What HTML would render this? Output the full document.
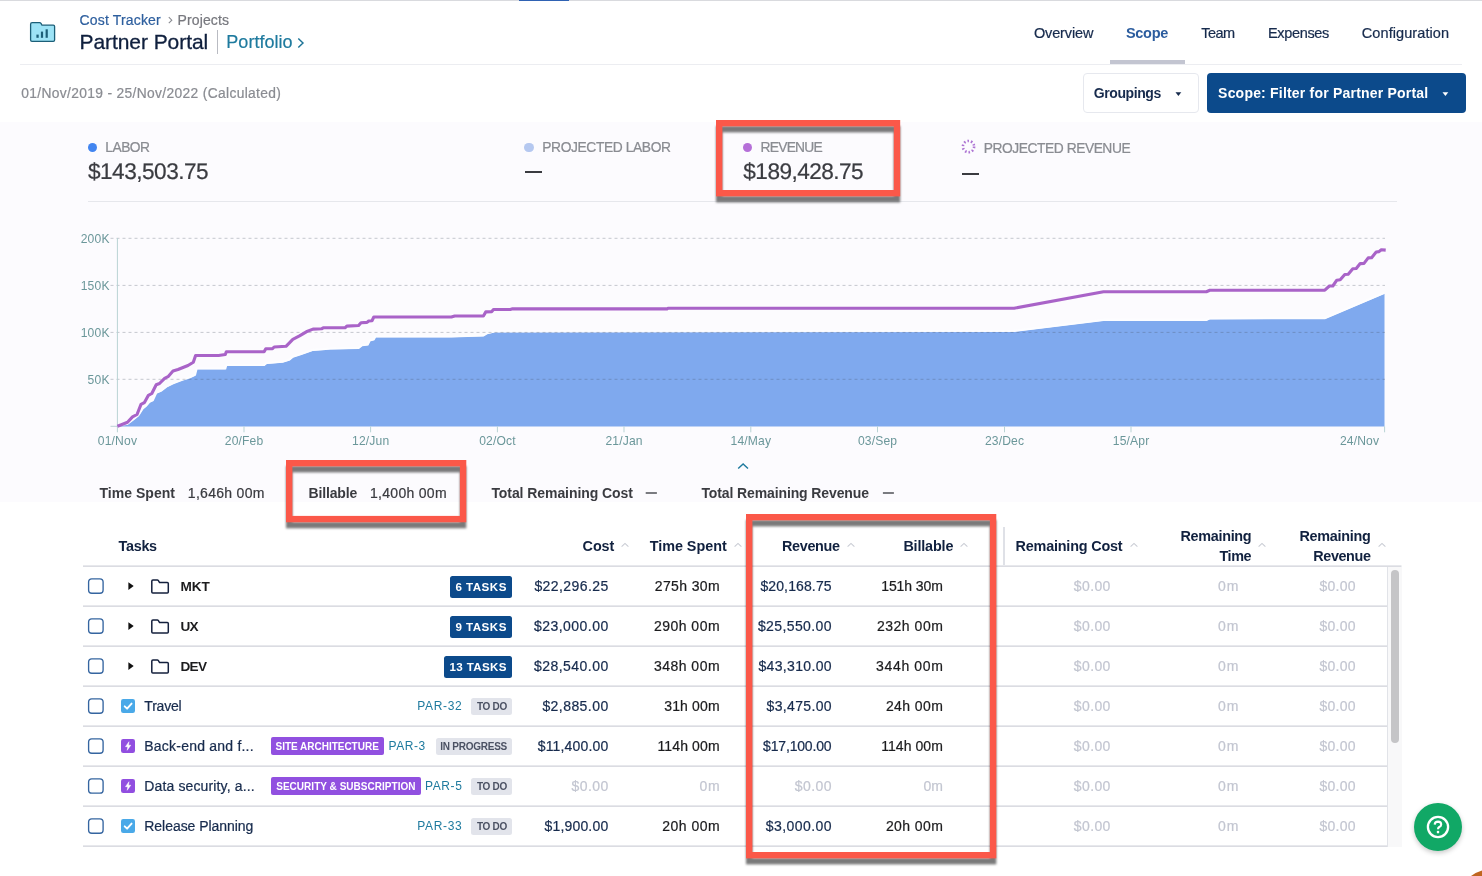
<!DOCTYPE html>
<html><head><meta charset="utf-8"><title>Cost Tracker - Partner Portal</title>
<style>
html,body{margin:0;padding:0;}
body{width:1482px;height:876px;position:relative;overflow:hidden;background:#fff;font-family:"Liberation Sans",sans-serif;}
.t{position:absolute;white-space:pre;}
.a{position:absolute;}
.hl{position:absolute;height:0;border-top:1.5px solid #d8dae0;}
.cb{position:absolute;left:87.7px;width:13.4px;height:13.4px;border:1.5px solid #3a6aa3;border-radius:3.5px;background:#fff;}
.tag{position:absolute;background:#0c4a8b;border-radius:2.5px;height:21.9px;}
.lz{position:absolute;background:#e2e4eb;border-radius:2.5px;height:17px;}
.pz{position:absolute;background:#9150e0;border-radius:2px;height:17.6px;}
.red{position:absolute;border:6.3px solid #fb5849;box-sizing:border-box;filter:drop-shadow(-0.3px 5.8px 1.3px rgba(0,0,0,.53));}
.ic{position:absolute;left:121.1px;width:14.2px;height:14px;border-radius:2.2px;}
</style></head><body><div id="w" style="position:absolute;left:0;top:0;width:1482px;height:876px;will-change:transform">
<!-- top bar -->
<div class="a" style="left:0;top:0;width:1482px;height:1.2px;background:#d9dade"></div>
<div class="a" style="left:519px;top:0;width:50px;height:1.3px;background:#2f62b3"></div>
<!-- header border + active tab -->
<div class="a" style="left:20px;top:64px;width:1442px;height:1px;background:#ecedf1"></div>
<div class="a" style="left:1110.2px;top:60.2px;width:74.7px;height:4px;background:#c3c5d1"></div>
<div class="a" style="left:217.2px;top:30px;width:1.2px;height:23.5px;background:#b9bbc2"></div>
<!-- app icon -->
<svg class="a" style="left:26px;top:18px" width="34" height="28" viewBox="26 18 34 28">
<path d="M30.6 24.2 Q30.6 22.7 32.1 22.7 L39.6 22.7 Q40.5 22.7 41 23.4 L42 25.2 L53.3 25.2 Q54.6 25.2 54.6 26.6 L54.6 40 Q54.6 41.4 53.3 41.4 L32 41.4 Q30.6 41.4 30.6 40 Z" fill="#9de3f6" stroke="#1c5f78" stroke-width="1.3" stroke-linejoin="round"/>
<rect x="36.4" y="34.6" width="2.3" height="3.2" fill="#1c5f78"/><rect x="40.9" y="31.6" width="2.2" height="6.2" fill="#1c5f78"/><rect x="45.6" y="29.3" width="2.2" height="8.5" fill="#1c5f78"/>
</svg>
<!-- breadcrumb chevron & portfolio chevron -->
<svg class="a" style="left:166px;top:14px" width="10" height="12" viewBox="0 0 10 12"><path d="M2.8 3.2 L5.8 6.2 L2.8 9.2" fill="none" stroke="#8a8c92" stroke-width="1.1"/></svg>
<svg class="a" style="left:295px;top:35px" width="12" height="16" viewBox="0 0 12 16"><path d="M3.3 3.5 L8 8 L3.3 12.5" fill="none" stroke="#1e7497" stroke-width="1.45"/></svg>
<!-- buttons -->
<div class="a" style="left:1083px;top:73.2px;width:113.7px;height:38px;border:1px solid #e6e8ee;border-radius:4px;background:#fff"></div>
<svg class="a" style="left:1174px;top:90px" width="9" height="8" viewBox="0 0 9 8"><path d="M1.5 2.3 L7.3 2.3 L4.4 6 Z" fill="#172b4d"/></svg>
<div class="a" style="left:1207px;top:73.2px;width:258.6px;height:40px;border-radius:4px;background:#0c4a8b"></div>
<svg class="a" style="left:1440.5px;top:90px" width="9" height="8" viewBox="0 0 9 8"><path d="M1.5 2.3 L7.3 2.3 L4.4 6 Z" fill="#fff"/></svg>
<!-- panel -->
<div class="a" style="left:0;top:122px;width:1482px;height:380px;background:#fcfbfe"></div>
<div class="a" style="left:88px;top:201px;width:1309px;height:1px;background:#e6e7ec"></div>
<div class="a" style="left:87.5px;top:142.6px;width:9.7px;height:9.7px;border-radius:50%;background:#4285f0"></div>
<div class="a" style="left:524.3px;top:142.6px;width:9.6px;height:9.6px;border-radius:50%;background:#b5c8f0"></div>
<div class="a" style="left:742.7px;top:142.6px;width:9.5px;height:9.5px;border-radius:50%;background:#b56fd8"></div>
<svg class="a" style="left:960px;top:138px" width="18" height="18" viewBox="0 0 18 18"><circle cx="8.5" cy="8.6" r="5.6" fill="none" stroke="#ad74d3" stroke-width="2.6" stroke-dasharray="1.55 1.97"/></svg>
<div class="a" style="left:524.8px;top:171.2px;width:17px;height:2px;background:#3a3b40"></div>
<div class="a" style="left:961.5px;top:173px;width:17.4px;height:2px;background:#3a3b40"></div>
<svg class="a" style="left:640px;top:488px" width="260" height="10" viewBox="640 488 260 10"><rect x="645.7" y="492.3" width="11.2" height="1.4" fill="#44454a"/><rect x="882.9" y="492.3" width="11" height="1.4" fill="#44454a"/></svg>
<svg class="a" style="left:735.5px;top:460.9px" width="14" height="10" viewBox="0 0 14 10"><path d="M2.2 7.6 L7.1 3 L12 7.6" fill="none" stroke="#1e7a9e" stroke-width="1.4"/></svg>
<svg class="a" style="left:0;top:220px" width="1482" height="240" viewBox="0 220 1482 240">
<path d="M117.4 425.8 L127.5 424.1 L134.2 419.0 L138.3 415.7 L142.7 408.9 L146.0 406.2 L149.4 402.2 L152.8 400.5 L156.2 393.1 L161.2 391.0 L166.3 387.0 L173.0 383.6 L181.5 380.3 L189.9 377.6 L195.0 375.2 L196.6 368.8 L225.3 368.8 L226.3 365.4 L264.1 365.4 L266.5 363.4 L282.7 362.0 L289.4 360.0 L292.8 357.0 L301.2 354.3 L313.0 350.2 L323.2 349.6 L330.0 348.9 L358.6 348.2 L362.0 345.5 L367.7 344.8 L369.7 340.8 L373.8 339.8 L375.5 336.7 L451.4 336.7 L483.4 335.7 L486.8 333.7 L495.2 331.7 L1014.1 331.3 L1103.5 320.2 L1206.4 320.2 L1209.8 318.7 L1324.8 318.5 L1384.5 293.2 L1384.5 426 L117.4 426 Z" fill="#7fa9ee" transform="translate(0,0.5)"/>
<path d="M117.4 425.8 L127.5 424.1 L134.2 419.0 L138.3 415.7 L142.7 408.9 L146.0 406.2 L149.4 402.2 L152.8 400.5 L156.2 393.1 L161.2 391.0 L166.3 387.0 L173.0 383.6 L181.5 380.3 L189.9 377.6 L195.0 375.2 L196.6 368.8 L225.3 368.8 L226.3 365.4 L264.1 365.4 L266.5 363.4 L282.7 362.0 L289.4 360.0 L292.8 357.0 L301.2 354.3 L313.0 350.2 L323.2 349.6 L330.0 348.9 L358.6 348.2 L362.0 345.5 L367.7 344.8 L369.7 340.8 L373.8 339.8 L375.5 336.7 L451.4 336.7 L483.4 335.7 L486.8 333.7 L495.2 331.7 L1014.1 331.3 L1103.5 320.2 L1206.4 320.2 L1209.8 318.7 L1324.8 318.5 L1384.5 293.2" fill="none" stroke="#fdfdff" stroke-width="2.2" transform="translate(0,-0.4)"/>
<path d="M110.5 238.3 L1385 238.3" stroke="rgba(70,80,95,.30)" stroke-width="1" stroke-dasharray="3 3"/>
<path d="M110.5 285.4 L1385 285.4" stroke="rgba(70,80,95,.30)" stroke-width="1" stroke-dasharray="3 3"/>
<path d="M110.5 332.4 L1385 332.4" stroke="rgba(70,80,95,.30)" stroke-width="1" stroke-dasharray="3 3"/>
<path d="M110.5 379.3 L1385 379.3" stroke="rgba(70,80,95,.30)" stroke-width="1" stroke-dasharray="3 3"/>
<path d="M117.4 238 L117.4 426.5" stroke="#b9d3d4" stroke-width="1"/>
<path d="M110.5 426.3 L117.4 426.3" stroke="#b9d3d4" stroke-width="1"/>
<path d="M117.4 426.3 L117.4 432.3" stroke="#b9d3d4" stroke-width="1"/>
<path d="M244 426.3 L244 432.3" stroke="#b9d3d4" stroke-width="1"/>
<path d="M370.6 426.3 L370.6 432.3" stroke="#b9d3d4" stroke-width="1"/>
<path d="M497.4 426.3 L497.4 432.3" stroke="#b9d3d4" stroke-width="1"/>
<path d="M624 426.3 L624 432.3" stroke="#b9d3d4" stroke-width="1"/>
<path d="M750.8 426.3 L750.8 432.3" stroke="#b9d3d4" stroke-width="1"/>
<path d="M877.5 426.3 L877.5 432.3" stroke="#b9d3d4" stroke-width="1"/>
<path d="M1004.5 426.3 L1004.5 432.3" stroke="#b9d3d4" stroke-width="1"/>
<path d="M1131 426.3 L1131 432.3" stroke="#b9d3d4" stroke-width="1"/>
<path d="M1384.6 426.3 L1384.6 432.3" stroke="#b9d3d4" stroke-width="1"/>
<path d="M117.4 425.8 L122.0 424.0 L127.5 421.8 L132.5 416.4 L137.0 414.0 L141.0 403.9 L144.3 402.2 L148.4 394.8 L151.8 393.0 L156.2 384.3 L159.5 383.0 L164.6 377.9 L168.0 376.2 L173.0 370.5 L178.0 369.0 L183.0 367.0 L188.0 365.0 L193.3 361.7 L195.6 355.0 L218.6 355.0 L225.3 354.0 L226.3 351.3 L264.1 351.3 L265.8 348.2 L272.5 348.2 L274.2 346.5 L286.0 345.8 L292.8 338.8 L299.5 335.4 L306.3 331.3 L313.0 328.6 L321.5 328.3 L323.2 327.3 L345.0 327.3 L346.8 325.6 L358.6 325.0 L361.0 322.2 L367.0 321.9 L368.7 320.5 L372.0 320.2 L373.8 316.5 L451.4 316.5 L454.7 315.5 L483.4 315.5 L485.8 311.4 L491.8 311.1 L493.5 309.0 L510.4 309.0 L512.0 308.4 L667.0 308.4 L668.0 307.7 L1014.1 307.7 L1103.5 291.2 L1206.4 291.2 L1209.8 289.8 L1324.8 289.6 L1329.4 285.5 L1332.8 285.5 L1336.8 279.7 L1340.2 279.3 L1344.8 274.0 L1348.2 273.7 L1352.8 268.3 L1356.2 268.0 L1360.2 263.1 L1364.0 262.9 L1368.2 257.4 L1371.6 257.2 L1376.2 251.5 L1379.0 251.1 L1381.3 249.2 L1385.7 249.6" fill="none" stroke="#a963c8" stroke-width="3.1" stroke-linejoin="round" stroke-linecap="butt" transform="translate(0,0.5)"/>
</svg>
<!-- table lines -->
<svg class="a" style="left:0;top:560px" width="1482" height="300" viewBox="0 560 1482 300"><rect x="83" y="565.4" width="1318.5" height="1.5" fill="#d8d9df"/><rect x="83" y="605.4" width="1304.5" height="1.5" fill="#d8d9df"/><rect x="83" y="645.4" width="1304.5" height="1.5" fill="#d8d9df"/><rect x="83" y="685.4" width="1304.5" height="1.5" fill="#d8d9df"/><rect x="83" y="725.4" width="1304.5" height="1.5" fill="#d8d9df"/><rect x="83" y="765.4" width="1304.5" height="1.5" fill="#d8d9df"/><rect x="83" y="805.4" width="1304.5" height="1.5" fill="#d8d9df"/><rect x="83" y="845.4" width="1304.5" height="1.5" fill="#d8d9df"/></svg>
<div class="a" style="left:1003.4px;top:527px;width:1.2px;height:38px;background:#dfe1e7"></div>
<div class="a" style="left:1387.5px;top:566.5px;width:14.3px;height:280.8px;background:#f8f8f9"></div>
<div class="a" style="left:1387px;top:566.5px;width:1px;height:280.8px;background:#e1e3e8"></div>
<svg class="a" style="left:1462px;top:864px" width="20" height="12" viewBox="0 0 20 12"><path d="M9 12 Q14.5 8.2 20 6.6 L20 12 Z" fill="#c0651f"/></svg>
<div class="a" style="left:1391px;top:569.5px;width:7.6px;height:173px;border-radius:4px;background:#c5c5c7"></div>
<svg class="a" style="left:86px;top:576.0px" width="20" height="20" viewBox="0 0 20 20"><rect x="2.6" y="2.8" width="14.5" height="14.4" rx="3.2" fill="#fff" stroke="#3565a0" stroke-width="1.35"/></svg>
<svg class="a" style="left:86px;top:616.0px" width="20" height="20" viewBox="0 0 20 20"><rect x="2.6" y="2.8" width="14.5" height="14.4" rx="3.2" fill="#fff" stroke="#3565a0" stroke-width="1.35"/></svg>
<svg class="a" style="left:86px;top:656.0px" width="20" height="20" viewBox="0 0 20 20"><rect x="2.6" y="2.8" width="14.5" height="14.4" rx="3.2" fill="#fff" stroke="#3565a0" stroke-width="1.35"/></svg>
<svg class="a" style="left:86px;top:696.0px" width="20" height="20" viewBox="0 0 20 20"><rect x="2.6" y="2.8" width="14.5" height="14.4" rx="3.2" fill="#fff" stroke="#3565a0" stroke-width="1.35"/></svg>
<svg class="a" style="left:86px;top:736.0px" width="20" height="20" viewBox="0 0 20 20"><rect x="2.6" y="2.8" width="14.5" height="14.4" rx="3.2" fill="#fff" stroke="#3565a0" stroke-width="1.35"/></svg>
<svg class="a" style="left:86px;top:776.0px" width="20" height="20" viewBox="0 0 20 20"><rect x="2.6" y="2.8" width="14.5" height="14.4" rx="3.2" fill="#fff" stroke="#3565a0" stroke-width="1.35"/></svg>
<svg class="a" style="left:86px;top:816.0px" width="20" height="20" viewBox="0 0 20 20"><rect x="2.6" y="2.8" width="14.5" height="14.4" rx="3.2" fill="#fff" stroke="#3565a0" stroke-width="1.35"/></svg>
<svg class="a" style="left:126px;top:580.2px" width="10" height="12" viewBox="0 0 10 12"><path d="M2.4 2.2 L7.7 6.1 L2.4 10 Z" fill="#111"/></svg>
<svg class="a" style="left:149px;top:577.2px" width="22" height="18" viewBox="0 0 22 18"><path d="M2.8 4.2 Q2.8 3.1 3.9 3.1 L8.3 3.1 Q9 3.1 9.4 3.7 L10.6 5.6 L18.3 5.6 Q19.3 5.6 19.3 6.6 L19.3 15 Q19.3 16 18.3 16 L3.8 16 Q2.8 16 2.8 15 Z" fill="none" stroke="#14203d" stroke-width="1.5" stroke-linejoin="round"/></svg>
<svg class="a" style="left:126px;top:620.2px" width="10" height="12" viewBox="0 0 10 12"><path d="M2.4 2.2 L7.7 6.1 L2.4 10 Z" fill="#111"/></svg>
<svg class="a" style="left:149px;top:617.2px" width="22" height="18" viewBox="0 0 22 18"><path d="M2.8 4.2 Q2.8 3.1 3.9 3.1 L8.3 3.1 Q9 3.1 9.4 3.7 L10.6 5.6 L18.3 5.6 Q19.3 5.6 19.3 6.6 L19.3 15 Q19.3 16 18.3 16 L3.8 16 Q2.8 16 2.8 15 Z" fill="none" stroke="#14203d" stroke-width="1.5" stroke-linejoin="round"/></svg>
<svg class="a" style="left:126px;top:660.2px" width="10" height="12" viewBox="0 0 10 12"><path d="M2.4 2.2 L7.7 6.1 L2.4 10 Z" fill="#111"/></svg>
<svg class="a" style="left:149px;top:657.2px" width="22" height="18" viewBox="0 0 22 18"><path d="M2.8 4.2 Q2.8 3.1 3.9 3.1 L8.3 3.1 Q9 3.1 9.4 3.7 L10.6 5.6 L18.3 5.6 Q19.3 5.6 19.3 6.6 L19.3 15 Q19.3 16 18.3 16 L3.8 16 Q2.8 16 2.8 15 Z" fill="none" stroke="#14203d" stroke-width="1.5" stroke-linejoin="round"/></svg>
<div class="tag" style="left:450.3px;top:575.7px;width:61.6px"></div>
<div class="tag" style="left:450.3px;top:615.7px;width:61.6px"></div>
<div class="tag" style="left:444.3px;top:655.7px;width:67.5px"></div>
<div class="ic" style="top:699.1px;background:#4aa9e8"><svg width="14.2" height="14" viewBox="0 0 14.2 14"><path d="M3.7 7.3 L6.1 9.7 L10.6 4.6" fill="none" stroke="#fff" stroke-width="1.9" stroke-linecap="round" stroke-linejoin="round"/></svg></div>
<div class="ic" style="top:739.1px;background:#914ee0"><svg width="14.2" height="14" viewBox="0 0 14.2 14"><path d="M8 2.7 L4.5 7.7 L6.8 7.7 L6.2 11.3 L9.8 6.2 L7.5 6.2 Z" fill="#fff" stroke="#fff" stroke-width="0.5" stroke-linejoin="round"/></svg></div>
<div class="ic" style="top:779.1px;background:#914ee0"><svg width="14.2" height="14" viewBox="0 0 14.2 14"><path d="M8 2.7 L4.5 7.7 L6.8 7.7 L6.2 11.3 L9.8 6.2 L7.5 6.2 Z" fill="#fff" stroke="#fff" stroke-width="0.5" stroke-linejoin="round"/></svg></div>
<div class="ic" style="top:819.1px;background:#4aa9e8"><svg width="14.2" height="14" viewBox="0 0 14.2 14"><path d="M3.7 7.3 L6.1 9.7 L10.6 4.6" fill="none" stroke="#fff" stroke-width="1.9" stroke-linecap="round" stroke-linejoin="round"/></svg></div>
<div class="lz" style="left:471.3px;top:697.6px;width:41.1px"></div>
<div class="lz" style="left:435.5px;top:737.6px;width:76.9px"></div>
<div class="lz" style="left:471.3px;top:777.6px;width:41.1px"></div>
<div class="lz" style="left:471.3px;top:817.6px;width:41.1px"></div>
<div class="pz" style="left:270.9px;top:737.3px;width:113.3px"></div>
<div class="pz" style="left:271.2px;top:777.3px;width:149.8px"></div>
<svg class="a" style="left:620.2px;top:540px" width="10" height="10" viewBox="0 0 10 10"><path d="M1.6 6.6 L5 3.4 L8.4 6.6" fill="none" stroke="#c9ccd4" stroke-width="1.1"/></svg>
<svg class="a" style="left:733.2px;top:540px" width="10" height="10" viewBox="0 0 10 10"><path d="M1.6 6.6 L5 3.4 L8.4 6.6" fill="none" stroke="#c9ccd4" stroke-width="1.1"/></svg>
<svg class="a" style="left:846.2px;top:540px" width="10" height="10" viewBox="0 0 10 10"><path d="M1.6 6.6 L5 3.4 L8.4 6.6" fill="none" stroke="#c9ccd4" stroke-width="1.1"/></svg>
<svg class="a" style="left:959.2px;top:540px" width="10" height="10" viewBox="0 0 10 10"><path d="M1.6 6.6 L5 3.4 L8.4 6.6" fill="none" stroke="#c9ccd4" stroke-width="1.1"/></svg>
<svg class="a" style="left:1128.8px;top:540px" width="10" height="10" viewBox="0 0 10 10"><path d="M1.6 6.6 L5 3.4 L8.4 6.6" fill="none" stroke="#c9ccd4" stroke-width="1.1"/></svg>
<svg class="a" style="left:1257.2px;top:540px" width="10" height="10" viewBox="0 0 10 10"><path d="M1.6 6.6 L5 3.4 L8.4 6.6" fill="none" stroke="#c9ccd4" stroke-width="1.1"/></svg>
<svg class="a" style="left:1376.8px;top:540px" width="10" height="10" viewBox="0 0 10 10"><path d="M1.6 6.6 L5 3.4 L8.4 6.6" fill="none" stroke="#c9ccd4" stroke-width="1.1"/></svg>

<!-- help -->
<div class="a" style="left:1413.9px;top:802.9px;width:47.8px;height:47.8px;border-radius:50%;background:#11a866;box-shadow:0 2px 5px rgba(0,0,0,.22)"></div>
<svg class="a" style="left:1423.7px;top:812.6px" width="28" height="28" viewBox="0 0 28 28"><circle cx="14" cy="14" r="10.1" fill="none" stroke="#fff" stroke-width="2.3"/><path d="M10.7 11.6 Q10.8 8.6 14 8.6 Q17.2 8.7 17.2 11.4 Q17.2 13 15.3 14 Q14 14.8 14 16.2" fill="none" stroke="#fff" stroke-width="2.1"/><circle cx="14" cy="19.1" r="1.3" fill="#fff"/></svg>
<span class="t" style="top:11px;font-size:14px;line-height:18px;color:#2e5f9e;-webkit-text-stroke:0.22px #2e5f9e;left:79.50px;letter-spacing:0.167px;">Cost Tracker</span>
<span class="t" style="top:11px;font-size:14px;line-height:18px;color:#77787e;-webkit-text-stroke:0.22px #77787e;left:177.60px;letter-spacing:0.117px;">Projects</span>
<span class="t" style="top:28px;font-size:21px;line-height:27px;color:#0f1f3d;-webkit-text-stroke:0.3px #0f1f3d;left:79.50px;letter-spacing:-0.066px;">Partner Portal</span>
<span class="t" style="top:31px;font-size:18px;line-height:23px;color:#1e7a9e;-webkit-text-stroke:0.2px #1e7a9e;left:226.30px;letter-spacing:0.032px;">Portfolio</span>
<span class="t" style="top:24px;font-size:14.5px;line-height:19px;color:#172b4d;-webkit-text-stroke:0.22px #172b4d;left:1033.90px;letter-spacing:-0.134px;">Overview</span>
<span class="t" style="top:24px;font-size:14.5px;line-height:19px;color:#2b5c9e;font-weight:700;left:1125.90px;letter-spacing:-0.254px;">Scope</span>
<span class="t" style="top:24px;font-size:14.5px;line-height:19px;color:#172b4d;-webkit-text-stroke:0.22px #172b4d;left:1201.20px;letter-spacing:-0.490px;">Team</span>
<span class="t" style="top:24px;font-size:14.5px;line-height:19px;color:#172b4d;-webkit-text-stroke:0.22px #172b4d;left:1268.00px;letter-spacing:-0.341px;">Expenses</span>
<span class="t" style="top:24px;font-size:14.5px;line-height:19px;color:#172b4d;-webkit-text-stroke:0.22px #172b4d;left:1361.80px;letter-spacing:0.079px;">Configuration</span>
<span class="t" style="top:85px;font-size:13.8px;line-height:18px;color:#8a8c92;-webkit-text-stroke:0.22px #8a8c92;left:21.30px;letter-spacing:0.341px;">01/Nov/2019 - 25/Nov/2022 (Calculated)</span>
<span class="t" style="top:84px;font-size:14px;line-height:18px;color:#172b4d;font-weight:700;left:1093.80px;letter-spacing:-0.410px;">Groupings</span>
<span class="t" style="top:84px;font-size:14px;line-height:18px;color:#ffffff;font-weight:700;left:1218.10px;letter-spacing:0.202px;">Scope: Filter for Partner Portal</span>
<span class="t" style="top:139px;font-size:13.8px;line-height:18px;color:#8a8c92;-webkit-text-stroke:0.22px #8a8c92;left:105.30px;letter-spacing:-0.520px;">LABOR</span>
<span class="t" style="top:157px;font-size:22.6px;line-height:29px;color:#3a3b40;text-rendering:geometricPrecision;-webkit-text-stroke:0.22px #3a3b40;left:87.90px;letter-spacing:-0.486px;">$143,503.75</span>
<span class="t" style="top:139px;font-size:13.8px;line-height:18px;color:#8a8c92;-webkit-text-stroke:0.22px #8a8c92;left:542.30px;letter-spacing:-0.391px;">PROJECTED LABOR</span>
<span class="t" style="top:139px;font-size:13.8px;line-height:18px;color:#8a8c92;-webkit-text-stroke:0.22px #8a8c92;left:760.60px;letter-spacing:-0.767px;">REVENUE</span>
<span class="t" style="top:157px;font-size:22.6px;line-height:29px;color:#3a3b40;text-rendering:geometricPrecision;-webkit-text-stroke:0.22px #3a3b40;left:743.30px;letter-spacing:-0.526px;">$189,428.75</span>
<span class="t" style="top:140px;font-size:13.8px;line-height:18px;color:#8a8c92;-webkit-text-stroke:0.22px #8a8c92;left:983.80px;letter-spacing:-0.456px;">PROJECTED REVENUE</span>
<span class="t" style="top:484px;font-size:14px;line-height:18px;color:#3a3b40;font-weight:700;left:99.40px;letter-spacing:0.044px;">Time Spent</span>
<span class="t" style="top:484px;font-size:14px;line-height:18px;color:#3a3b40;-webkit-text-stroke:0.22px #3a3b40;left:187.80px;letter-spacing:0.294px;">1,646h 00m</span>
<span class="t" style="top:484px;font-size:14px;line-height:18px;color:#3a3b40;font-weight:700;left:308.60px;letter-spacing:-0.171px;">Billable</span>
<span class="t" style="top:484px;font-size:14px;line-height:18px;color:#3a3b40;-webkit-text-stroke:0.22px #3a3b40;left:370.00px;letter-spacing:0.294px;">1,400h 00m</span>
<span class="t" style="top:484px;font-size:14px;line-height:18px;color:#3a3b40;font-weight:700;left:491.40px;letter-spacing:-0.072px;">Total Remaining Cost</span>
<span class="t" style="top:484px;font-size:14px;line-height:18px;color:#3a3b40;font-weight:700;left:701.40px;letter-spacing:-0.114px;">Total Remaining Revenue</span>
<span class="t" style="top:537px;font-size:14.4px;line-height:19px;color:#11213f;font-weight:700;left:118.60px;letter-spacing:-0.312px;">Tasks</span>
<span class="t" style="top:537px;font-size:14.4px;line-height:19px;color:#11213f;font-weight:700;left:582.60px;letter-spacing:-0.095px;">Cost</span>
<span class="t" style="top:537px;font-size:14.4px;line-height:19px;color:#11213f;font-weight:700;left:649.70px;letter-spacing:-0.035px;">Time Spent</span>
<span class="t" style="top:537px;font-size:14.4px;line-height:19px;color:#11213f;font-weight:700;left:782.00px;letter-spacing:-0.333px;">Revenue</span>
<span class="t" style="top:537px;font-size:14.4px;line-height:19px;color:#11213f;font-weight:700;left:903.40px;letter-spacing:-0.170px;">Billable</span>
<span class="t" style="top:537px;font-size:14.4px;line-height:19px;color:#11213f;font-weight:700;left:1015.50px;letter-spacing:-0.188px;">Remaining Cost</span>
<span class="t" style="top:527px;font-size:14.4px;line-height:19px;color:#11213f;font-weight:700;left:1180.50px;letter-spacing:-0.308px;">Remaining</span>
<span class="t" style="top:547px;font-size:14.4px;line-height:19px;color:#11213f;font-weight:700;left:1219.40px;letter-spacing:-0.376px;">Time</span>
<span class="t" style="top:527px;font-size:14.4px;line-height:19px;color:#11213f;font-weight:700;left:1299.40px;letter-spacing:-0.258px;">Remaining</span>
<span class="t" style="top:547px;font-size:14.4px;line-height:19px;color:#11213f;font-weight:700;left:1313.30px;letter-spacing:-0.400px;">Revenue</span>
<span class="t" style="top:578px;font-size:13.6px;line-height:18px;color:#1c1c1e;font-weight:700;left:180.40px;letter-spacing:-0.077px;">MKT</span>
<span class="t" style="top:618px;font-size:13.6px;line-height:18px;color:#1c1c1e;font-weight:700;left:180.40px;letter-spacing:-0.691px;">UX</span>
<span class="t" style="top:658px;font-size:13.6px;line-height:18px;color:#1c1c1e;font-weight:700;left:180.40px;letter-spacing:-0.677px;">DEV</span>
<span class="t" style="top:579px;font-size:11.6px;line-height:15px;color:#fff;font-weight:700;left:455.50px;letter-spacing:0.465px;">6 TASKS</span>
<span class="t" style="top:619px;font-size:11.6px;line-height:15px;color:#fff;font-weight:700;left:455.50px;letter-spacing:0.465px;">9 TASKS</span>
<span class="t" style="top:659px;font-size:11.6px;line-height:15px;color:#fff;font-weight:700;left:449.60px;letter-spacing:0.320px;">13 TASKS</span>
<span class="t" style="top:697px;font-size:14px;line-height:18px;color:#172b4d;-webkit-text-stroke:0.22px #172b4d;left:144.30px;letter-spacing:-0.198px;">Travel</span>
<span class="t" style="top:737px;font-size:14px;line-height:18px;color:#172b4d;-webkit-text-stroke:0.22px #172b4d;left:144.30px;letter-spacing:0.216px;">Back-end and f...</span>
<span class="t" style="top:777px;font-size:14px;line-height:18px;color:#172b4d;-webkit-text-stroke:0.22px #172b4d;left:144.30px;letter-spacing:0.133px;">Data security, a...</span>
<span class="t" style="top:817px;font-size:14px;line-height:18px;color:#172b4d;-webkit-text-stroke:0.22px #172b4d;left:144.30px;letter-spacing:-0.050px;">Release Planning</span>
<span class="t" style="top:698px;font-size:12px;line-height:16px;color:#1e7a9e;left:417.20px;letter-spacing:0.692px;">PAR-32</span>
<span class="t" style="top:738px;font-size:12px;line-height:16px;color:#1e7a9e;left:388.50px;letter-spacing:0.537px;">PAR-3</span>
<span class="t" style="top:778px;font-size:12px;line-height:16px;color:#1e7a9e;left:425.00px;letter-spacing:0.587px;">PAR-5</span>
<span class="t" style="top:818px;font-size:12px;line-height:16px;color:#1e7a9e;left:417.20px;letter-spacing:0.692px;">PAR-33</span>
<span class="t" style="top:700px;font-size:10px;line-height:13px;color:#4b5163;font-weight:700;left:476.90px;letter-spacing:-0.271px;">TO DO</span>
<span class="t" style="top:740px;font-size:10px;line-height:13px;color:#4b5163;font-weight:700;left:440.20px;letter-spacing:-0.237px;">IN PROGRESS</span>
<span class="t" style="top:780px;font-size:10px;line-height:13px;color:#4b5163;font-weight:700;left:476.90px;letter-spacing:-0.271px;">TO DO</span>
<span class="t" style="top:820px;font-size:10px;line-height:13px;color:#4b5163;font-weight:700;left:476.90px;letter-spacing:-0.271px;">TO DO</span>
<span class="t" style="top:740px;font-size:10px;line-height:13px;color:#fff;font-weight:700;left:275.50px;letter-spacing:-0.014px;">SITE ARCHITECTURE</span>
<span class="t" style="top:780px;font-size:10px;line-height:13px;color:#fff;font-weight:700;left:276.20px;letter-spacing:0.026px;">SECURITY &amp; SUBSCRIPTION</span>
<span class="t" style="top:577px;font-size:14px;line-height:18px;color:#172b4d;-webkit-text-stroke:0.22px #172b4d;left:534.40px;letter-spacing:0.414px;">$22,296.25</span>
<span class="t" style="top:577px;font-size:14px;line-height:18px;color:#1c1c1e;-webkit-text-stroke:0.22px #1c1c1e;left:654.80px;letter-spacing:0.360px;">275h 30m</span>
<span class="t" style="top:577px;font-size:14px;line-height:18px;color:#172b4d;-webkit-text-stroke:0.22px #172b4d;left:760.40px;letter-spacing:0.125px;">$20,168.75</span>
<span class="t" style="top:577px;font-size:14px;line-height:18px;color:#1c1c1e;-webkit-text-stroke:0.22px #1c1c1e;left:881.20px;letter-spacing:-0.083px;">151h 30m</span>
<span class="t" style="top:577px;font-size:14px;line-height:18px;color:#c3c6d1;-webkit-text-stroke:0.22px #c3c6d1;left:1073.80px;letter-spacing:0.388px;">$0.00</span>
<span class="t" style="top:577px;font-size:14px;line-height:18px;color:#c3c6d1;-webkit-text-stroke:0.22px #c3c6d1;left:1218.10px;letter-spacing:0.847px;">0m</span>
<span class="t" style="top:577px;font-size:14px;line-height:18px;color:#c3c6d1;-webkit-text-stroke:0.22px #c3c6d1;left:1319.40px;letter-spacing:0.288px;">$0.00</span>
<span class="t" style="top:617px;font-size:14px;line-height:18px;color:#172b4d;-webkit-text-stroke:0.22px #172b4d;left:533.90px;letter-spacing:0.469px;">$23,000.00</span>
<span class="t" style="top:617px;font-size:14px;line-height:18px;color:#1c1c1e;-webkit-text-stroke:0.22px #1c1c1e;left:653.90px;letter-spacing:0.488px;">290h 00m</span>
<span class="t" style="top:617px;font-size:14px;line-height:18px;color:#172b4d;-webkit-text-stroke:0.22px #172b4d;left:757.90px;letter-spacing:0.402px;">$25,550.00</span>
<span class="t" style="top:617px;font-size:14px;line-height:18px;color:#1c1c1e;-webkit-text-stroke:0.22px #1c1c1e;left:876.90px;letter-spacing:0.531px;">232h 00m</span>
<span class="t" style="top:617px;font-size:14px;line-height:18px;color:#c3c6d1;-webkit-text-stroke:0.22px #c3c6d1;left:1073.80px;letter-spacing:0.388px;">$0.00</span>
<span class="t" style="top:617px;font-size:14px;line-height:18px;color:#c3c6d1;-webkit-text-stroke:0.22px #c3c6d1;left:1218.10px;letter-spacing:0.847px;">0m</span>
<span class="t" style="top:617px;font-size:14px;line-height:18px;color:#c3c6d1;-webkit-text-stroke:0.22px #c3c6d1;left:1319.40px;letter-spacing:0.288px;">$0.00</span>
<span class="t" style="top:657px;font-size:14px;line-height:18px;color:#172b4d;-webkit-text-stroke:0.22px #172b4d;left:533.90px;letter-spacing:0.469px;">$28,540.00</span>
<span class="t" style="top:657px;font-size:14px;line-height:18px;color:#1c1c1e;-webkit-text-stroke:0.22px #1c1c1e;left:653.90px;letter-spacing:0.488px;">348h 00m</span>
<span class="t" style="top:657px;font-size:14px;line-height:18px;color:#172b4d;-webkit-text-stroke:0.22px #172b4d;left:758.40px;letter-spacing:0.347px;">$43,310.00</span>
<span class="t" style="top:657px;font-size:14px;line-height:18px;color:#1c1c1e;-webkit-text-stroke:0.22px #1c1c1e;left:876.10px;letter-spacing:0.646px;">344h 00m</span>
<span class="t" style="top:657px;font-size:14px;line-height:18px;color:#c3c6d1;-webkit-text-stroke:0.22px #c3c6d1;left:1073.80px;letter-spacing:0.388px;">$0.00</span>
<span class="t" style="top:657px;font-size:14px;line-height:18px;color:#c3c6d1;-webkit-text-stroke:0.22px #c3c6d1;left:1218.10px;letter-spacing:0.847px;">0m</span>
<span class="t" style="top:657px;font-size:14px;line-height:18px;color:#c3c6d1;-webkit-text-stroke:0.22px #c3c6d1;left:1319.40px;letter-spacing:0.288px;">$0.00</span>
<span class="t" style="top:697px;font-size:14px;line-height:18px;color:#172b4d;-webkit-text-stroke:0.22px #172b4d;left:542.40px;letter-spacing:0.438px;">$2,885.00</span>
<span class="t" style="top:697px;font-size:14px;line-height:18px;color:#1c1c1e;-webkit-text-stroke:0.22px #1c1c1e;left:664.20px;letter-spacing:0.153px;">31h 00m</span>
<span class="t" style="top:697px;font-size:14px;line-height:18px;color:#172b4d;-webkit-text-stroke:0.22px #172b4d;left:766.50px;letter-spacing:0.350px;">$3,475.00</span>
<span class="t" style="top:697px;font-size:14px;line-height:18px;color:#1c1c1e;-webkit-text-stroke:0.22px #1c1c1e;left:885.90px;letter-spacing:0.419px;">24h 00m</span>
<span class="t" style="top:697px;font-size:14px;line-height:18px;color:#c3c6d1;-webkit-text-stroke:0.22px #c3c6d1;left:1073.80px;letter-spacing:0.388px;">$0.00</span>
<span class="t" style="top:697px;font-size:14px;line-height:18px;color:#c3c6d1;-webkit-text-stroke:0.22px #c3c6d1;left:1218.10px;letter-spacing:0.847px;">0m</span>
<span class="t" style="top:697px;font-size:14px;line-height:18px;color:#c3c6d1;-webkit-text-stroke:0.22px #c3c6d1;left:1319.40px;letter-spacing:0.288px;">$0.00</span>
<span class="t" style="top:737px;font-size:14px;line-height:18px;color:#172b4d;-webkit-text-stroke:0.22px #172b4d;left:537.70px;letter-spacing:0.163px;">$11,400.00</span>
<span class="t" style="top:737px;font-size:14px;line-height:18px;color:#1c1c1e;-webkit-text-stroke:0.22px #1c1c1e;left:657.50px;letter-spacing:0.124px;">114h 00m</span>
<span class="t" style="top:737px;font-size:14px;line-height:18px;color:#172b4d;-webkit-text-stroke:0.22px #172b4d;left:763.10px;letter-spacing:-0.175px;">$17,100.00</span>
<span class="t" style="top:737px;font-size:14px;line-height:18px;color:#1c1c1e;-webkit-text-stroke:0.22px #1c1c1e;left:881.20px;letter-spacing:0.067px;">114h 00m</span>
<span class="t" style="top:737px;font-size:14px;line-height:18px;color:#c3c6d1;-webkit-text-stroke:0.22px #c3c6d1;left:1073.80px;letter-spacing:0.388px;">$0.00</span>
<span class="t" style="top:737px;font-size:14px;line-height:18px;color:#c3c6d1;-webkit-text-stroke:0.22px #c3c6d1;left:1218.10px;letter-spacing:0.847px;">0m</span>
<span class="t" style="top:737px;font-size:14px;line-height:18px;color:#c3c6d1;-webkit-text-stroke:0.22px #c3c6d1;left:1319.40px;letter-spacing:0.288px;">$0.00</span>
<span class="t" style="top:777px;font-size:14px;line-height:18px;color:#c3c6d1;-webkit-text-stroke:0.22px #c3c6d1;left:571.50px;letter-spacing:0.413px;">$0.00</span>
<span class="t" style="top:777px;font-size:14px;line-height:18px;color:#c3c6d1;-webkit-text-stroke:0.22px #c3c6d1;left:699.60px;letter-spacing:0.547px;">0m</span>
<span class="t" style="top:777px;font-size:14px;line-height:18px;color:#c3c6d1;-webkit-text-stroke:0.22px #c3c6d1;left:794.80px;letter-spacing:0.438px;">$0.00</span>
<span class="t" style="top:777px;font-size:14px;line-height:18px;color:#c3c6d1;-webkit-text-stroke:0.22px #c3c6d1;left:923.40px;letter-spacing:0.047px;">0m</span>
<span class="t" style="top:777px;font-size:14px;line-height:18px;color:#c3c6d1;-webkit-text-stroke:0.22px #c3c6d1;left:1073.80px;letter-spacing:0.388px;">$0.00</span>
<span class="t" style="top:777px;font-size:14px;line-height:18px;color:#c3c6d1;-webkit-text-stroke:0.22px #c3c6d1;left:1218.10px;letter-spacing:0.847px;">0m</span>
<span class="t" style="top:777px;font-size:14px;line-height:18px;color:#c3c6d1;-webkit-text-stroke:0.22px #c3c6d1;left:1319.40px;letter-spacing:0.288px;">$0.00</span>
<span class="t" style="top:817px;font-size:14px;line-height:18px;color:#172b4d;-webkit-text-stroke:0.22px #172b4d;left:544.50px;letter-spacing:0.175px;">$1,900.00</span>
<span class="t" style="top:817px;font-size:14px;line-height:18px;color:#1c1c1e;-webkit-text-stroke:0.22px #1c1c1e;left:662.20px;letter-spacing:0.486px;">20h 00m</span>
<span class="t" style="top:817px;font-size:14px;line-height:18px;color:#172b4d;-webkit-text-stroke:0.22px #172b4d;left:765.80px;letter-spacing:0.438px;">$3,000.00</span>
<span class="t" style="top:817px;font-size:14px;line-height:18px;color:#1c1c1e;-webkit-text-stroke:0.22px #1c1c1e;left:885.90px;letter-spacing:0.419px;">20h 00m</span>
<span class="t" style="top:817px;font-size:14px;line-height:18px;color:#c3c6d1;-webkit-text-stroke:0.22px #c3c6d1;left:1073.80px;letter-spacing:0.388px;">$0.00</span>
<span class="t" style="top:817px;font-size:14px;line-height:18px;color:#c3c6d1;-webkit-text-stroke:0.22px #c3c6d1;left:1218.10px;letter-spacing:0.847px;">0m</span>
<span class="t" style="top:817px;font-size:14px;line-height:18px;color:#c3c6d1;-webkit-text-stroke:0.22px #c3c6d1;left:1319.40px;letter-spacing:0.288px;">$0.00</span>
<span class="t" style="top:231px;font-size:12.1px;line-height:16px;color:#6b979a;left:80.65px;letter-spacing:0.200px;">200K</span>
<span class="t" style="top:278px;font-size:12.1px;line-height:16px;color:#6b979a;left:80.65px;letter-spacing:0.200px;">150K</span>
<span class="t" style="top:325px;font-size:12.1px;line-height:16px;color:#6b979a;left:80.65px;letter-spacing:0.200px;">100K</span>
<span class="t" style="top:372px;font-size:12.1px;line-height:16px;color:#6b979a;left:87.57px;letter-spacing:0.200px;">50K</span>
<span class="t" style="top:433px;font-size:12.1px;line-height:16px;color:#6b979a;left:97.86px;letter-spacing:0.150px;">01/Nov</span>
<span class="t" style="top:433px;font-size:12.1px;line-height:16px;color:#6b979a;left:224.80px;letter-spacing:0.150px;">20/Feb</span>
<span class="t" style="top:433px;font-size:12.1px;line-height:16px;color:#6b979a;left:352.07px;letter-spacing:0.150px;">12/Jun</span>
<span class="t" style="top:433px;font-size:12.1px;line-height:16px;color:#6b979a;left:479.20px;letter-spacing:0.150px;">02/Oct</span>
<span class="t" style="top:433px;font-size:12.1px;line-height:16px;color:#6b979a;left:605.47px;letter-spacing:0.150px;">21/Jan</span>
<span class="t" style="top:433px;font-size:12.1px;line-height:16px;color:#6b979a;left:730.59px;letter-spacing:0.150px;">14/May</span>
<span class="t" style="top:433px;font-size:12.1px;line-height:16px;color:#6b979a;left:857.95px;letter-spacing:0.150px;">03/Sep</span>
<span class="t" style="top:433px;font-size:12.1px;line-height:16px;color:#6b979a;left:984.96px;letter-spacing:0.150px;">23/Dec</span>
<span class="t" style="top:433px;font-size:12.1px;line-height:16px;color:#6b979a;left:1112.80px;letter-spacing:0.150px;">15/Apr</span>
<span class="t" style="top:433px;font-size:12.1px;line-height:16px;color:#6b979a;left:1339.96px;letter-spacing:0.150px;">24/Nov</span>
<svg class="a" style="left:706.0px;top:110.1px;filter:drop-shadow(0px 6px 0.8px rgba(0,0,0,.52))" width="204.2" height="106.4"><rect x="13.20" y="13.20" width="177.80" height="70.00" fill="none" stroke="#fb5849" stroke-width="6.4"/></svg>
<svg class="a" style="left:276.0px;top:450.1px;filter:drop-shadow(0px 6px 0.8px rgba(0,0,0,.52))" width="200.3" height="92.3"><rect x="13.20" y="13.20" width="173.90" height="55.90" fill="none" stroke="#fb5849" stroke-width="6.4"/></svg>
<svg class="a" style="left:736.0px;top:503.9px;filter:drop-shadow(0px 6px 0.8px rgba(0,0,0,.52))" width="270.3" height="374.4"><rect x="13.20" y="13.20" width="243.90" height="338.00" fill="none" stroke="#fb5849" stroke-width="6.4"/></svg>

</div></body></html>
